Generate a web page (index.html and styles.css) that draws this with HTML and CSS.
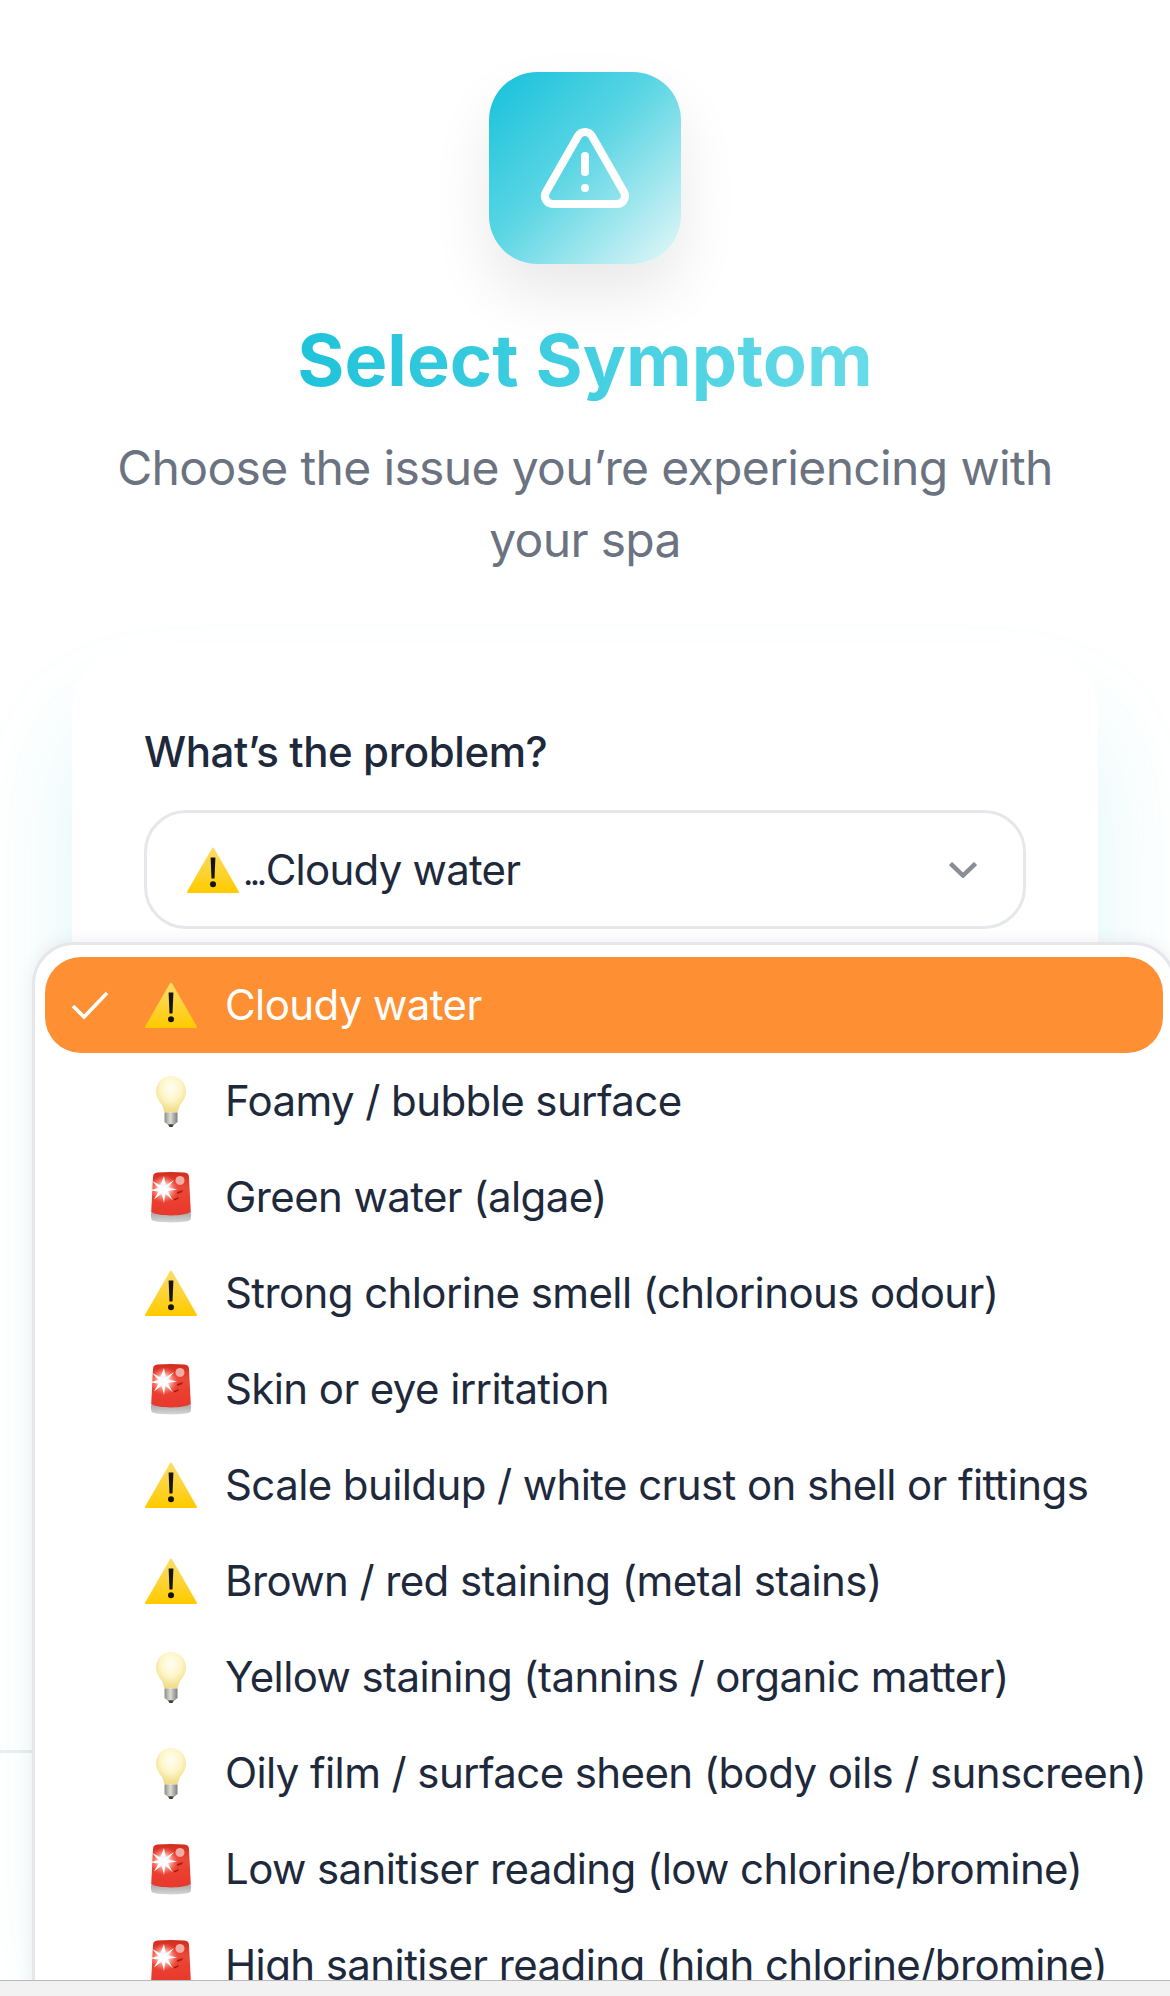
FILE: index.html
```html
<!DOCTYPE html>
<html lang="en">
<head>
<meta charset="utf-8">
<title>Select Symptom</title>
<link rel="stylesheet" href="styles.css">
</head>
<body>
<svg class="defs" width="0" height="0" aria-hidden="true">
  <defs>
    <linearGradient id="warnFill" x1="0" y1="0" x2="0" y2="1">
      <stop offset="0" stop-color="#fbdc6a"/>
      <stop offset="1" stop-color="#ffcb00"/>
    </linearGradient>
    <radialGradient id="bulbFill" cx="0.5" cy="0.33" r="0.62">
      <stop offset="0" stop-color="#fffef4"/>
      <stop offset="0.55" stop-color="#fdf6c8"/>
      <stop offset="1" stop-color="#f2dd8c"/>
    </radialGradient>
    <linearGradient id="bulbBase" x1="0" y1="0" x2="1" y2="0">
      <stop offset="0" stop-color="#8d8d8a"/>
      <stop offset="0.45" stop-color="#dcdcd8"/>
      <stop offset="1" stop-color="#7d7d7a"/>
    </linearGradient>
    <linearGradient id="sirenFill" x1="0" y1="0" x2="0" y2="1">
      <stop offset="0" stop-color="#d22a1c"/>
      <stop offset="0.35" stop-color="#ee4636"/>
      <stop offset="1" stop-color="#e8382b"/>
    </linearGradient>
    <linearGradient id="sirenBase" x1="0" y1="0" x2="0" y2="1">
      <stop offset="0" stop-color="#a6a6a6"/>
      <stop offset="1" stop-color="#d6d6d6"/>
    </linearGradient>
    <radialGradient id="sirenGlow" cx="0.5" cy="0.5" r="0.5">
      <stop offset="0" stop-color="#ffffff"/>
      <stop offset="0.4" stop-color="#ffd9d3" stop-opacity="0.85"/>
      <stop offset="1" stop-color="#ff8a7c" stop-opacity="0"/>
    </radialGradient>
    <filter id="soft" x="-20%" y="-20%" width="140%" height="140%"><feGaussianBlur stdDeviation="0.6"/></filter>
    <symbol id="e-warn" viewBox="0 0 54 54">
      <path d="M27 5.500 52 49H2Z" fill="url(#warnFill)" stroke="url(#warnFill)" stroke-width="2" stroke-linejoin="round"/>
      <path d="M24.600 14.500h4.800l-.9 21h-3Z" fill="#141414"/>
      <circle cx="27" cy="41.300" r="3" fill="#141414"/>
    </symbol>
    <symbol id="e-bulb" viewBox="0 0 54 54">
      <path d="M27 2C18.700 2 12 8.700 12 17c0 7 4.200 10.700 6.800 16 .8 1.700 1.200 3.500 1.400 5.500h13.600c.2-2 .6-3.800 1.400-5.500C38.200 27.700 42 24 42 17 42 8.700 35.300 2 27 2Z" fill="url(#bulbFill)"/>
      <path d="M20.500 38.500h13V48l-3 2.500h-7l-3-2.500Z" fill="url(#bulbBase)"/>
      <path d="M24 50.300h6L28.500 53h-3Z" fill="#3f3f3f"/>
    </symbol>
    <symbol id="e-siren" viewBox="0 0 54 54">
      <path d="M7.500 42c6 3 33 3 39 0 .8 3 .8 6.500-.3 8-3 3.200-35.400 3.200-38.400 0-1.100-1.500-1.100-5-.3-8Z" fill="url(#sirenBase)"/>
      <path d="M7.200 42 9 7C9.200 4 10.500 2.800 13.500 2.500c9-.7 18-.7 27 0 3 .3 4.300 1.500 4.500 4.500l1.800 35c-6 4.500-33.600 4.500-39.600 0Z" fill="url(#sirenFill)"/>
      <circle cx="20" cy="19" r="14" fill="url(#sirenGlow)"/>
      <path d="M20 6l1.800 9.500L30 10l-6 7.500 9 2-9.200 1.500 4.700 9-7.200-6.500L20 33l-2.300-9.500-7.700 6 4.500-8-9-1 8.800-2.500-6-7 8 4.200Z" fill="#fff" filter="url(#soft)"/>
      <circle cx="36" cy="10.500" r="4.500" fill="#f6c9c3" opacity=".8" filter="url(#soft)"/>
      <path d="M33 22l6-2-1 2.200-5 1.800ZM30 29l5-2-1 2-4 1.600Z" fill="#7c1410" opacity=".75"/>
    </symbol>
  </defs>
</svg>

<div class="viewport">
  <main class="page">
    <div class="badge">
      <svg class="badge-icon" viewBox="0 0 24 24" fill="none" stroke="#fff" stroke-width="2" stroke-linecap="round" stroke-linejoin="round">
        <path d="m21.730 18-8-14a2 2 0 0 0-3.480 0l-8 14A2 2 0 0 0 4 21h16a2 2 0 0 0 1.730-3"/>
        <path d="M12 9v4"/>
        <path d="M12 17h.01"/>
      </svg>
    </div>
    <h1 class="title">Select Symptom</h1>
    <p class="subtitle">Choose the issue you’re experiencing with your spa</p>

    <section class="card">
      <label class="label">What’s the problem?</label>
      <div class="select-wrap">
        <div class="select">
          <svg class="emoji"><use href="#e-warn"/></svg>
          <span class="select-value"><span class="dots">...</span>Cloudy water</span>
          <svg class="chevron" viewBox="0 0 28 16" fill="none" stroke="#8a8e96" stroke-width="4.500"><path d="M1.500 1.500 14 13.500 26.500 1.500"/></svg>
        </div>
        <div class="menu">
          <div class="option selected">
            <span class="check"><svg class="check-icon" viewBox="0 0 38 30" fill="none" stroke="#fff" stroke-width="3.600"><path d="M2 16 13 27 36 3"/></svg></span>
            <svg class="emoji"><use href="#e-warn"/></svg><span class="option-text">Cloudy water</span>
          </div>
          <div class="option"><span class="check"></span><svg class="emoji"><use href="#e-bulb"/></svg><span class="option-text">Foamy / bubble surface</span></div>
          <div class="option"><span class="check"></span><svg class="emoji"><use href="#e-siren"/></svg><span class="option-text">Green water (algae)</span></div>
          <div class="option"><span class="check"></span><svg class="emoji"><use href="#e-warn"/></svg><span class="option-text">Strong chlorine smell (chlorinous odour)</span></div>
          <div class="option"><span class="check"></span><svg class="emoji"><use href="#e-siren"/></svg><span class="option-text">Skin or eye irritation</span></div>
          <div class="option"><span class="check"></span><svg class="emoji"><use href="#e-warn"/></svg><span class="option-text">Scale buildup / white crust on shell or fittings</span></div>
          <div class="option"><span class="check"></span><svg class="emoji"><use href="#e-warn"/></svg><span class="option-text">Brown / red staining (metal stains)</span></div>
          <div class="option"><span class="check"></span><svg class="emoji"><use href="#e-bulb"/></svg><span class="option-text">Yellow staining (tannins / organic matter)</span></div>
          <div class="option"><span class="check"></span><svg class="emoji"><use href="#e-bulb"/></svg><span class="option-text">Oily film / surface sheen (body oils / sunscreen)</span></div>
          <div class="option"><span class="check"></span><svg class="emoji"><use href="#e-siren"/></svg><span class="option-text">Low sanitiser reading (low chlorine/bromine)</span></div>
          <div class="option"><span class="check"></span><svg class="emoji"><use href="#e-siren"/></svg><span class="option-text">High sanitiser reading (high chlorine/bromine)</span></div>
        </div>
      </div>
    </section>
  </main>
  <div class="footer"></div>
</div>
<div class="browser-bar"></div>
</body>
</html>
```
FILE: styles.css
```css
* { box-sizing: border-box; }
html, body { margin: 0; padding: 0; height: 100%; overflow: hidden; }
body {
  background: #fff;
  font-family: "Inter", "Liberation Sans", sans-serif;
  color: #1e293b;
  display: flex;
  flex-direction: column;
}
.defs { position: absolute; }
.viewport { position: relative; flex: 1; overflow: hidden; }
.page { position: relative; z-index: 1; display: flex; flex-direction: column; align-items: center; padding: 72px 72px 0; }
.badge {
  width: 192px; height: 192px; border-radius: 48px;
  display: flex; align-items: center; justify-content: center;
  background: linear-gradient(135deg, #14c1da 0%, #5ad5e4 45%, #e6f8f8 100%);
  box-shadow: 0 30px 60px rgba(0, 0, 0, .09);
}
.badge-icon { width: 96px; height: 96px; }
.title {
  margin: 48px 0 0; font-size: 72px; line-height: 96px; font-weight: 700;
  background: linear-gradient(90deg, #1fc3da, #68dbe8);
  -webkit-background-clip: text; background-clip: text; color: transparent;
}
.subtitle {
  margin: 24px 0 0; width: 960px; text-align: center;
  font-size: 48px; line-height: 72px; color: #6b7280; letter-spacing: -.65px; font-weight: 400;
}
.card {
  position: relative; align-self: stretch; margin-top: 66px; padding: 72px 72px 0; height: 1300px;
  background: #fff; border-radius: 72px;
  box-shadow: 0 72px 96px rgba(40, 200, 210, .15);
}
.label { display: block; padding-top: 3px; font-size: 42px; line-height: 69px; font-weight: 500; color: #1e293b; letter-spacing: -.4px; }
.select-wrap { position: relative; margin-top: 24px; }
.select {
  height: 119px; border: 3px solid #e5e7eb; border-radius: 42px; padding: 0 46px 0 39px;
  display: flex; align-items: center; background: #fff;
}
.select-value { flex: 1; font-size: 42px; letter-spacing: -.75px; }
.dots { letter-spacing: -3.500px; margin-left: 3px; margin-right: 2px; font-size: 36px; }
.chevron { width: 28px; height: 16px; }
.emoji { width: 54px; height: 54px; flex: none; }
.menu {
  position: absolute; top: calc(100% + 13px); left: -112px; width: 1144px;
  background: #fff; border: 3px solid #e5e7eb; border-radius: 42px; padding: 12px 10px;
  box-shadow: 0 0 18px rgba(0, 0, 0, .07);
}
.option {
  height: 96px; border-radius: 36px; display: flex; align-items: center;
  font-size: 42px; letter-spacing: -.6px; white-space: nowrap;
}
.option.selected { background: #ff8f33; color: #fff; }
.check { width: 99px; flex: none; display: flex; padding-left: 26px; }
.check-icon { width: 38px; height: 30px; }
.option-text { margin-left: 27px; padding-bottom: 2px; }
.footer {
  position: absolute; left: 0; right: 0; bottom: 0; height: 230px;
  background: #fff; border-top: 3px solid #eceeef; z-index: 0;
}
.browser-bar { height: 16px; flex: none; background: #f2f2f2; border-top: 1px solid #b9b9b9; }
```
